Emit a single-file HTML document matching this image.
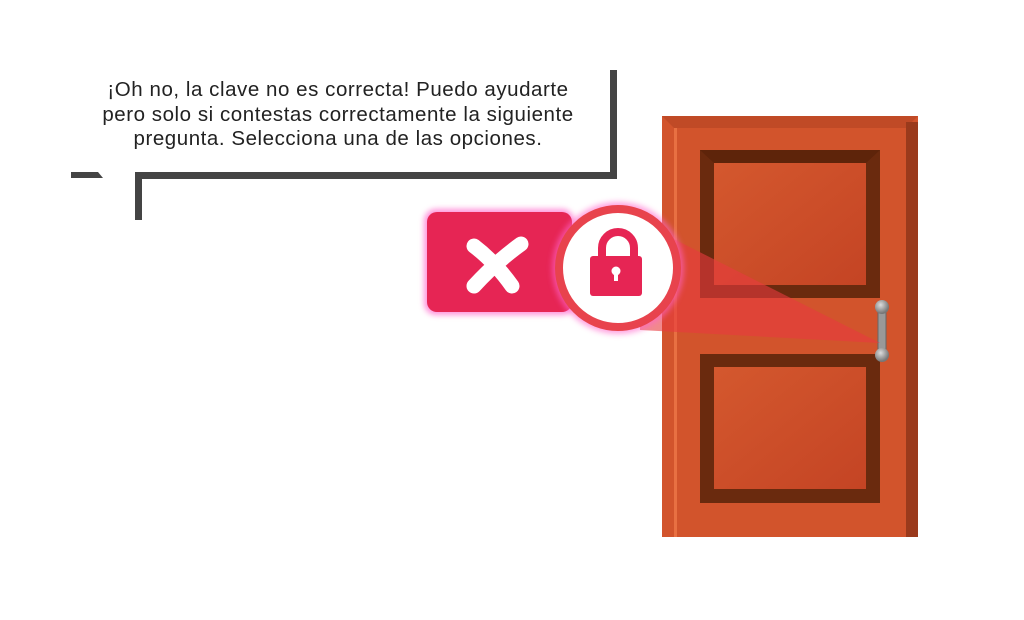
<!DOCTYPE html>
<html><head><meta charset="utf-8"><style>
html,body{margin:0;padding:0;background:#fff;width:1024px;height:620px;overflow:hidden}
.t{position:absolute;left:58px;top:78px;width:560px;text-align:center;font-family:"Liberation Sans",sans-serif;font-size:20.5px;letter-spacing:0.55px;line-height:24.5px;color:#222}
</style></head><body>
<svg width="1024" height="620" style="position:absolute;left:0;top:0">
<defs>
<linearGradient id="pg" x1="0" y1="0" x2="1" y2="1"><stop offset="0" stop-color="#d4582e"/><stop offset="1" stop-color="#c44424"/></linearGradient>
<filter id="gl" x="-20%" y="-20%" width="140%" height="140%"><feGaussianBlur stdDeviation="3"/></filter>
<radialGradient id="bl" cx="0.4" cy="0.35" r="0.6"><stop offset="0" stop-color="#ddd"/><stop offset="1" stop-color="#777"/></radialGradient>
</defs>
<rect x="610" y="70" width="7" height="109" fill="#444"/>
<rect x="135" y="172" width="482" height="7" fill="#444"/>
<polygon points="71,172 98,172 103,178 71,178" fill="#444"/>
<rect x="135" y="172" width="7" height="48" fill="#444"/>
<rect x="662" y="116" width="256" height="421" fill="#d2542c"/>
<polygon points="662,116 918,116 906,128 674,128" fill="#c04a26"/>
<rect x="906" y="122" width="12" height="415" fill="#9a3a1c"/>
<rect x="674" y="128" width="3" height="409" fill="#e87042"/>
<rect x="700" y="150" width="180" height="148" fill="#6a2a0e"/>
<polygon points="700,150 880,150 866,163 714,163" fill="#5e240a"/>
<rect x="714" y="163" width="152" height="122" fill="url(#pg)"/>
<rect x="700" y="354" width="180" height="149" fill="#6a2a0e"/>
<rect x="714" y="367" width="152" height="122" fill="url(#pg)"/>
<rect x="878" y="307" width="8" height="48" rx="3" fill="#999" stroke="#666"/>
<circle cx="882" cy="307" r="7" fill="url(#bl)"/>
<circle cx="882" cy="355" r="7" fill="url(#bl)"/>
<polygon points="640,222 880,343 640,330" fill="#e83a40" opacity="0.6"/>
<rect x="424" y="209" width="150" height="106" rx="12" fill="#ff66cc" filter="url(#gl)" opacity="0.7"/>
<rect x="427" y="212" width="145" height="100" rx="10" fill="#e62554"/>
<g stroke="#fff" stroke-width="15" stroke-linecap="round" fill="none">
<path d="M474 246 Q495 262 512 286"/>
<path d="M521 244 Q496 262 474 286"/>
</g>
<circle cx="618" cy="268" r="66" fill="#ff66cc" filter="url(#gl)" opacity="0.6"/>
<circle cx="618" cy="268" r="59" fill="#fff" stroke="#e8434d" stroke-width="8"/>
<path d="M602 258 v-10 a16 16 0 0 1 32 0 v10" fill="none" stroke="#e62554" stroke-width="8"/>
<rect x="590" y="256" width="52" height="40" rx="3" fill="#e62554"/>
<circle cx="616" cy="271" r="4.5" fill="#fff"/>
<rect x="614" y="272" width="4" height="9" fill="#fff"/>
</svg>
<div class="t">¡Oh no, la clave no es correcta! Puedo ayudarte<br>pero solo si contestas correctamente la siguiente<br>pregunta. Selecciona una de las opciones.</div>
</body></html>
